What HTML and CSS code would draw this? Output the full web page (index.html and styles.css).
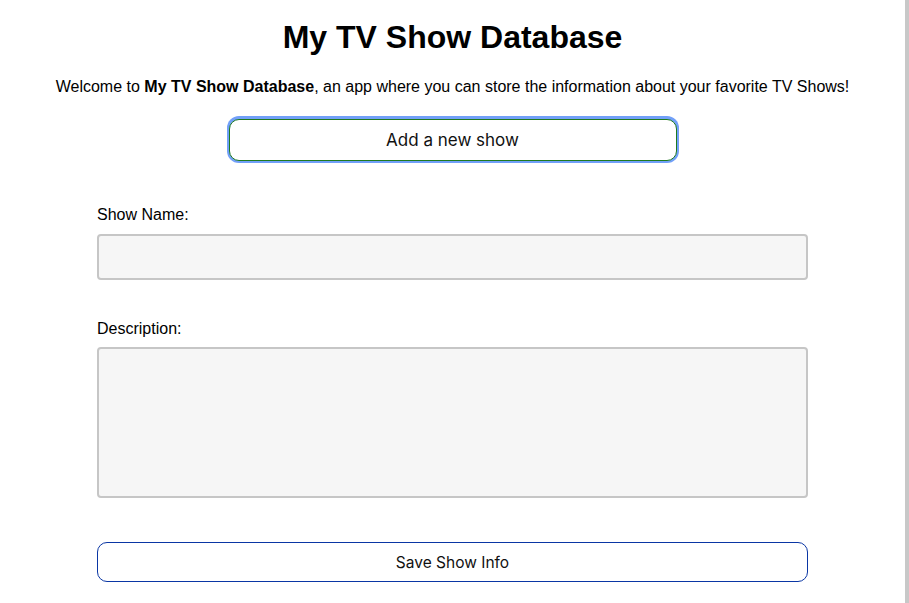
FILE: index.html
```html
<!DOCTYPE html>
<html lang="en">
<head>
<meta charset="utf-8">
<title>My TV Show Database</title>
<link rel="stylesheet" href="styles.css">
</head>
<body>
<div class="page">
  <main class="app">
    <h1 class="title">My TV Show Database</h1>
    <p class="intro">Welcome to <strong>My TV Show Database</strong>, an app where you can store the information about your favorite TV Shows!</p>
    <div class="add-row">
      <button class="add-btn" type="button">Add a new show</button>
    </div>
    <form class="show-form">
      <label class="field-label" for="name">Show Name:</label>
      <input class="field-input" id="name" type="text">
      <label class="field-label desc-label" for="desc">Description:</label>
      <textarea class="field-area" id="desc"></textarea>
      <button class="save-btn" type="button">Save Show Info</button>
    </form>
  </main>
  <div class="edge"></div>
</div>
</body>
</html>
```
FILE: styles.css
```css
html, body {
  margin: 0;
  padding: 0;
  height: 100%;
  background: #ffffff;
}
body {
  font-family: "Liberation Sans", Arial, sans-serif;
  color: #000;
}
.page {
  display: flex;
  height: 603px;
  overflow: hidden;
}
.app {
  flex: 1;
  display: flex;
  flex-direction: column;
  align-items: center;
}
.edge {
  width: 4px;
  background: #c8c8c8;
}
.title {
  font-size: 32px;
  font-weight: bold;
  margin: 19px 0 0;
  line-height: 37px;
}
.intro {
  font-size: 16px;
  margin: 22px 0 0;
  line-height: 18px;
}
.add-row {
  margin-top: 20px;
  padding: 3px 2px 2px 2px;
  border-radius: 12px;
  background: #72a0f8;
}
.add-btn {
  display: block;
  width: 448px;
  height: 42px;
  background: #fff;
  border: 1px solid #1e7a1e;
  border-radius: 10px;
  font-family: Inter, "Noto Sans", sans-serif;
  font-size: 17px;
  color: #111;
  padding: 0;
}
.show-form {
  width: 711px;
  display: flex;
  flex-direction: column;
  margin-top: 43px;
}
.field-label {
  font-size: 16px;
  line-height: 18px;
}
.field-input {
  margin-top: 10px;
  height: 46px;
  box-sizing: border-box;
  background: #f6f6f6;
  border: 2px solid #c6c6c6;
  border-radius: 4px;
  padding: 0 8px;
}
.desc-label {
  margin-top: 40px;
}
.field-area {
  margin-top: 9px;
  height: 151px;
  box-sizing: border-box;
  background: #f6f6f6;
  border: 2px solid #c6c6c6;
  border-radius: 4px;
  resize: none;
}
.save-btn {
  margin-top: 44px;
  height: 40px;
  background: #fff;
  border: 1px solid #0a36a4;
  border-radius: 10px;
  font-family: Inter, "Noto Sans", sans-serif;
  font-size: 15.5px;
  color: #111;
}
```
